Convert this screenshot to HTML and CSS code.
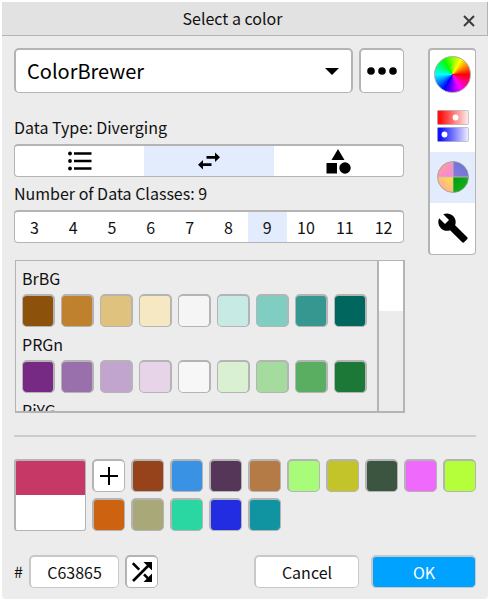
FILE: index.html
```html
<!DOCTYPE html>
<html lang="en">
<head>
<meta charset="utf-8">
<meta name="viewport" content="width=device-width, initial-scale=1">
<title>Select a color</title>
<link rel="stylesheet" href="styles.css">
</head>
<body>
<main class="dialog">
  <header class="titlebar">
    <h1>Select a color</h1>
    <button class="close" type="button" aria-label="Close"><svg width="12" height="12" viewBox="0 0 12 12"><path d="M1 1L11 11M11 1L1 11" fill="none" stroke="#3c3c3c" stroke-width="2"/></svg></button>
  </header>
  <form class="content">
    <div class="top">
      <div class="picker">
        <div class="source">
          <div class="select-wrap">
            <select class="box" aria-label="Palette source"><option>ColorBrewer</option></select>
            <svg class="caret" width="14" height="7" viewBox="0 0 14 7"><path d="M0 0H14L7 7Z"/></svg>
          </div>
          <button class="box more" type="button" aria-label="More options"><svg width="30" height="8" viewBox="0 0 30 8"><circle cx="4" cy="4" r="3.8"/><circle cx="15" cy="4" r="3.8"/><circle cx="26" cy="4" r="3.8"/></svg></button>
        </div>
        <div class="caption">Data Type: Diverging</div>
        <div class="segments" role="radiogroup" aria-label="Data type">
          <label><input type="radio" name="type" aria-label="Sequential"><svg width="24" height="20" viewBox="0 0 24 20"><path d="M6 2.5H23.5M6 10H23.5M6 17.5H23.5" fill="none" stroke="#000" stroke-width="2.6"/><circle cx="2" cy="2.5" r="1.9"/><circle cx="2" cy="10" r="1.9"/><circle cx="2" cy="17.5" r="1.9"/></svg></label>
          <label><input type="radio" name="type" aria-label="Diverging" checked><svg width="22" height="18" viewBox="0 0 22 18"><path d="M8.5 4.1H17V.5L22 5.3L17 10V6.8H8.5ZM13.5 11.2H5V8L0 12.7L5 17.5V14H13.5Z"/></svg></label>
          <label><input type="radio" name="type" aria-label="Qualitative"><svg width="25" height="25" viewBox="0 0 25 25"><path d="M12 0L18.5 11H5.500ZM.5 14H11V24.5H.5Z"/><circle cx="19" cy="19" r="5.7"/></svg></label>
        </div>
        <div class="caption">Number of Data Classes: 9</div>
        <div class="segments" role="radiogroup" aria-label="Number of data classes">
          <label><input type="radio" name="classes">3</label>
          <label><input type="radio" name="classes">4</label>
          <label><input type="radio" name="classes">5</label>
          <label><input type="radio" name="classes">6</label>
          <label><input type="radio" name="classes">7</label>
          <label><input type="radio" name="classes">8</label>
          <label><input type="radio" name="classes" checked>9</label>
          <label><input type="radio" name="classes">10</label>
          <label><input type="radio" name="classes">11</label>
          <label><input type="radio" name="classes">12</label>
        </div>
        <div class="palettes">
          <div class="palette-list">
            <div class="palette-name">BrBG</div>
            <div class="swatches">
              <button class="swatch" type="button" aria-label="#8c510a" style="background-color:#8c510a"></button>
              <button class="swatch" type="button" aria-label="#bf812d" style="background-color:#bf812d"></button>
              <button class="swatch" type="button" aria-label="#dfc27d" style="background-color:#dfc27d"></button>
              <button class="swatch" type="button" aria-label="#f6e8c3" style="background-color:#f6e8c3"></button>
              <button class="swatch" type="button" aria-label="#f5f5f5" style="background-color:#f5f5f5"></button>
              <button class="swatch" type="button" aria-label="#c7eae5" style="background-color:#c7eae5"></button>
              <button class="swatch" type="button" aria-label="#80cdc1" style="background-color:#80cdc1"></button>
              <button class="swatch" type="button" aria-label="#35978f" style="background-color:#35978f"></button>
              <button class="swatch" type="button" aria-label="#01665e" style="background-color:#01665e"></button>
            </div>
            <div class="palette-name">PRGn</div>
            <div class="swatches">
              <button class="swatch" type="button" aria-label="#762a83" style="background-color:#762a83"></button>
              <button class="swatch" type="button" aria-label="#9970ab" style="background-color:#9970ab"></button>
              <button class="swatch" type="button" aria-label="#c2a5cf" style="background-color:#c2a5cf"></button>
              <button class="swatch" type="button" aria-label="#e7d4e8" style="background-color:#e7d4e8"></button>
              <button class="swatch" type="button" aria-label="#f7f7f7" style="background-color:#f7f7f7"></button>
              <button class="swatch" type="button" aria-label="#d9f0d3" style="background-color:#d9f0d3"></button>
              <button class="swatch" type="button" aria-label="#a6dba0" style="background-color:#a6dba0"></button>
              <button class="swatch" type="button" aria-label="#5aae61" style="background-color:#5aae61"></button>
              <button class="swatch" type="button" aria-label="#1b7837" style="background-color:#1b7837"></button>
            </div>
            <div class="palette-name">PiYG</div>
          </div>
          <div class="track"><div class="thumb"></div></div>
        </div>
      </div>
      <nav class="modes" aria-label="Color picker mode">
        <button type="button" aria-label="Color wheel"><span class="wheel"></span></button>
        <button type="button" aria-label="Sliders"><svg width="32" height="32" viewBox="0 0 32 32"><defs><linearGradient id="red"><stop offset=".1" stop-color="#f11"/><stop offset="1" stop-color="#fff0f0"/></linearGradient><linearGradient id="blue"><stop offset=".1" stop-color="#11f"/><stop offset="1" stop-color="#f0f0ff"/></linearGradient></defs><g stroke="#999" stroke-opacity=".5"><rect x=".5" y=".5" width="31" height="14" rx="1" fill="url(#red)"/><rect x=".5" y="17.5" width="31" height="14" rx="1" fill="url(#blue)"/></g><g fill="#fff"><circle cx="18.5" cy="7.5" r="2.9"/><circle cx="7.5" cy="24.5" r="2.9"/></g></svg></button>
        <button type="button" class="active" aria-label="Palettes"><svg width="32" height="32" viewBox="0 0 32 32"><defs><linearGradient id="pink" x2="1" y2="1"><stop offset=".25" stop-color="#ff9da0"/><stop offset="1" stop-color="#ef83e6"/></linearGradient><linearGradient id="violet" x1="1" x2="0" y2="1"><stop offset=".2" stop-color="#6877d9"/><stop offset="1" stop-color="#9075d8"/></linearGradient><linearGradient id="yellow" x1="1" x2="0" y2="1"><stop offset="0" stop-color="#ffe33f"/><stop offset=".8" stop-color="#ffa8a0"/></linearGradient><linearGradient id="green" x2="1" y2="1"><stop offset="0" stop-color="#079b0b"/><stop offset="1" stop-color="#13b720"/></linearGradient></defs><path fill="url(#pink)" d="M16 16V.5A15.5 15.5 0 0 0 .5 16Z"/><path fill="url(#violet)" d="M16 16V.5A15.5 15.5 0 0 1 31.5 16Z"/><path fill="url(#yellow)" d="M16 16V31.5A15.5 15.5 0 0 1 .5 16Z"/><path fill="url(#green)" d="M16 16V31.5A15.5 15.5 0 0 0 31.5 16Z"/><path d="M16 1V31M1 16H31" stroke="#c9c1b4" stroke-width=".8"/><circle cx="16" cy="16" r="15.5" fill="none" stroke="#999" stroke-opacity=".7"/></svg></button>
        <button type="button" aria-label="Settings"><svg width="32" height="32" viewBox="0 0 24 24"><path d="M22.7 19l-9.1-9.1c.9-2.3.4-5-1.5-6.900-2-2-5-2.4-7.4-1.3L9 6 6 9 1.6 4.7C.4 7.100.9 10.1 2.9 12.1c1.9 1.9 4.6 2.4 6.9 1.5l9.1 9.1c.4.4 1 .4 1.4 0l2.3-2.3c.5-.4.5-1.1.1-1.4z"/></svg></button>
      </nav>
    </div>
    <hr>
    <div class="saved">
      <div class="preview" role="img" aria-label="Current color"><span class="current"></span></div>
      <div class="swatches wrap">
        <button class="swatch add" type="button" aria-label="Add color"><svg width="18" height="18" viewBox="0 0 18 18"><path d="M9 0V18M0 9H18" stroke="#000" stroke-width="2"/></svg></button>
        <button class="swatch" type="button" aria-label="#96421b" style="background-color:#96421b"></button>
        <button class="swatch" type="button" aria-label="#3992e4" style="background-color:#3992e4"></button>
        <button class="swatch" type="button" aria-label="#553658" style="background-color:#553658"></button>
        <button class="swatch" type="button" aria-label="#b57b46" style="background-color:#b57b46"></button>
        <button class="swatch" type="button" aria-label="#a9fc79" style="background-color:#a9fc79"></button>
        <button class="swatch" type="button" aria-label="#c2c429" style="background-color:#c2c429"></button>
        <button class="swatch" type="button" aria-label="#3c5541" style="background-color:#3c5541"></button>
        <button class="swatch" type="button" aria-label="#ee69fc" style="background-color:#ee69fc"></button>
        <button class="swatch" type="button" aria-label="#b4ff3a" style="background-color:#b4ff3a"></button>
        <button class="swatch" type="button" aria-label="#cd6210" style="background-color:#cd6210"></button>
        <button class="swatch" type="button" aria-label="#a9a878" style="background-color:#a9a878"></button>
        <button class="swatch" type="button" aria-label="#2ad6a2" style="background-color:#2ad6a2"></button>
        <button class="swatch" type="button" aria-label="#222ce0" style="background-color:#222ce0"></button>
        <button class="swatch" type="button" aria-label="#1094a1" style="background-color:#1094a1"></button>
      </div>
    </div>
    <footer class="actions">
      <label class="hash" for="hex">#</label>
      <input class="box hex" id="hex" type="text" value="C63865">
      <button class="swatch add" type="button" aria-label="Random color"><svg width="20" height="20" viewBox="0 0 20 20"><path d="M.8 1.2L7.2 7.6M1 19L18 2M12 12.4L18 18.4" fill="none" stroke="#000" stroke-width="2.6"/><path d="M11.500 0H20V8.500L17 5.500L14.500 3ZM20 11.500V20H11.500L14.500 17L17 14.500Z"/></svg></button>
      <button class="box action cancel" type="button">Cancel</button>
      <button class="box action ok" type="submit">OK</button>
    </footer>
  </form>
</main>
</body>
</html>
```
FILE: styles.css
```css
* { box-sizing: border-box; }

body {
  margin: 0;
  padding: 2px 1px 1px 2px;
  background: #fff;
  color: #111;
  font: 16px/24px "Noto Sans CJK SC", "Noto Sans", sans-serif;
}

button, input, select { margin: 0; padding: 0; font: inherit; color: inherit; }
button { display: flex; align-items: center; justify-content: center; }
svg { display: block; flex: none; }

.dialog { background: #ececec; border-radius: 0 0 4px 4px; }

.titlebar {
  display: grid;
  grid-template-columns: 1fr 24px;
  height: 34px;
  background: #e2e2e2;
  border: solid #b4b4b4;
  border-width: 0 1px 1px 0;
}
.titlebar h1 {
  margin: 0;
  font-size: 16px;
  font-weight: 400;
  line-height: 32px;
  text-align: center;
}
.close { border: 0; background: none; padding: 5px 12px 0 0; justify-content: flex-start; }

.content { padding: 12px 12px 11px; }
.top { display: flex; align-items: flex-start; gap: 24px; }
.picker { flex: 1; min-width: 0; }

.box, .swatch {
  border: solid #b4b4b4;
  border-width: 2px 1px 1px 2px;
  border-radius: 5px;
  background: #fff;
}

.source { display: flex; gap: 6px; height: 45px; margin-bottom: 22px; }
.select-wrap { position: relative; flex: 1; }
.select-wrap select {
  width: 100%;
  height: 100%;
  padding: 0 36px 0 11px;
  border-right-width: 2px;
  appearance: none;
  color: #000;
  font-size: 20px;
}
.caret { position: absolute; right: 14px; top: 20px; pointer-events: none; }
.more { width: 45px; }

.caption { margin-bottom: 5px; }

.segments {
  display: flex;
  height: 33px;
  margin-bottom: 4px;
  border: solid #b4b4b4;
  border-width: 2px 1px 1px;
  border-radius: 4px;
  background: #fff;
  overflow: hidden;
}
.segments label {
  position: relative;
  flex: 1 1 0;
  display: flex;
  align-items: center;
  justify-content: center;
}
.segments input { position: absolute; opacity: 0; }
.segments label:has(:checked) { background: #e3ecfd; }

.palettes {
  display: flex;
  height: 153px;
  margin: 17px -1px 0 1px;
  border: solid #b4b4b4;
  border-width: 1px 2px 2px 1px;
}
.palette-list { flex: 1; padding: 0 6px; overflow: hidden; }
.palette-name { height: 33px; line-height: 34px; }
.track { width: 26px; border-left: 2px solid #b4b4b4; }
.thumb { height: 50px; background: #fff; }

.swatches { display: flex; gap: 6px; }
.wrap { flex-wrap: wrap; }
.swatch { width: 33px; height: 33px; flex: none; }
.palettes .swatch { border-width: 2px 2px 1px 1px; }

.modes {
  width: 48px;
  border: solid #b4b4b4;
  border-width: 2px 1px 1px 2px;
  border-radius: 4px;
  background: #fff;
  overflow: hidden;
}
.modes button { width: 100%; height: 51px; padding-bottom: 2px; border: 0; background: none; }
.modes .active { background: #e3ecfd; }
.wheel {
  width: 37px;
  height: 37px;
  border: 1px solid #aaa;
  border-radius: 50%;
  background: conic-gradient(from 90deg, #f00, #f0f, #00f, #0ff, #0f0, #ff0, #f00) border-box;
}

hr { height: 2px; margin: 22px 0; border: 0; background: #ccc; }

.saved { display: flex; gap: 6px; }
.preview {
  flex: none;
  width: 72px;
  height: 72px;
  border: solid #b4b4b4;
  border-width: 2px 1px 1px 2px;
  border-radius: 3px;
  background: #fff;
  overflow: hidden;
}
.current { display: block; height: 34px; background: #c63865; }

.actions { display: flex; gap: 6px; margin-top: 24px; }
.hash { width: 9px; line-height: 33px; }
.hex { width: 90px; height: 33px; text-align: center; border-color: #c8c8c8; }
.action { width: 105px; height: 33px; border-color: #c8c8c8; }
.cancel { margin-left: auto; }
.ok { margin-left: 6px; background: #00a2ff; color: #fff; }
```
